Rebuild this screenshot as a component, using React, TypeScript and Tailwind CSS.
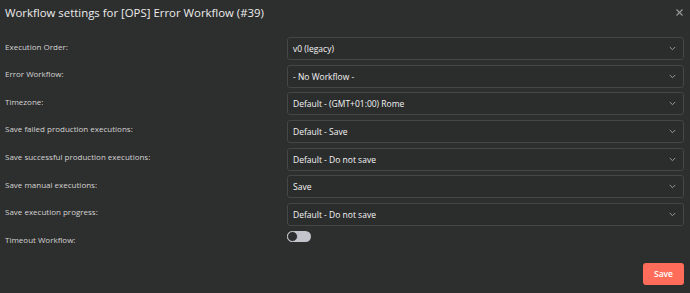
import React from "react";

const rows = [
  { label: "Execution Order:", value: "v0 (legacy)" },
  { label: "Error Workflow:", value: "- No Workflow -" },
  { label: "Timezone:", value: "Default - (GMT+01:00) Rome" },
  { label: "Save failed production executions:", value: "Default - Save" },
  { label: "Save successful production executions:", value: "Default - Do not save" },
  { label: "Save manual executions:", value: "Save" },
  { label: "Save execution progress:", value: "Default - Do not save" },
];

const Chevron = () => (
  <svg width="7" height="5" viewBox="0 0 7 5" fill="none">
    <path d="M0.8 1l2.7 2.7L6.2 1" stroke="#9a9a9a" strokeWidth="1" />
  </svg>
);

const App = () => {
  return (
    <div
      className="w-[690px] h-[293px] bg-[#2d2e2e] text-[#d4d4d4] flex flex-col overflow-hidden"
      style={{ fontFamily: "'Open Sans', 'Liberation Sans', sans-serif" }}
    >
      {/* header */}
      <div className="flex items-center justify-between pl-[5px] pr-[7px] pt-[5px] h-[21px]">
        <div className="text-[11.4px] text-[#ececec] leading-[16px]">
          Workflow settings for [OPS] Error Workflow (#39)
        </div>
        <svg width="7" height="7" viewBox="0 0 7 7" className="-mt-[2px]">
          <path d="M0.5 0.5l6 6M6.5 0.5l-6 6" stroke="#9a9a9a" strokeWidth="1.1" />
        </svg>
      </div>

      {/* rows */}
      <div className="flex flex-col gap-[4.67px] pl-[5px] pr-[6px] mt-[16px]">
        {rows.map((r) => (
          <div key={r.label} className="flex items-center h-[23px]">
            <div className="w-[282px] text-[8px] leading-[12px] -mt-[4px]">{r.label}</div>
            <div className="flex-1 h-[23px] flex items-center justify-between rounded-[3px] border border-[#454646] bg-[#2b2c2c] pl-[5px] pr-[7px]">
              <span className="text-[8.5px] text-[#f4f4f4] leading-[13px]">{r.value}</span>
              <Chevron />
            </div>
          </div>
        ))}
        <div className="flex items-start h-[16px]">
          <div className="w-[282px] text-[8px] leading-[12px] mt-[3px]">Timeout Workflow:</div>
          <div className="w-[24px] h-[11px] rounded-full bg-[#c4c4cc] flex items-center">
            <div className="w-[11px] h-[11px] rounded-full bg-[#2d2e2e] border-[1.5px] border-[#c4c4cc]" />
          </div>
        </div>
      </div>

      <div className="flex-1" />
      {/* footer */}
      <div className="flex justify-end pr-[6px] pb-[8px]">
        <button className="w-[41px] h-[22px] rounded-[3px] bg-[#ff6d5a] text-white text-[8.5px] font-semibold">
          Save
        </button>
      </div>
    </div>
  );
};

export default App;
